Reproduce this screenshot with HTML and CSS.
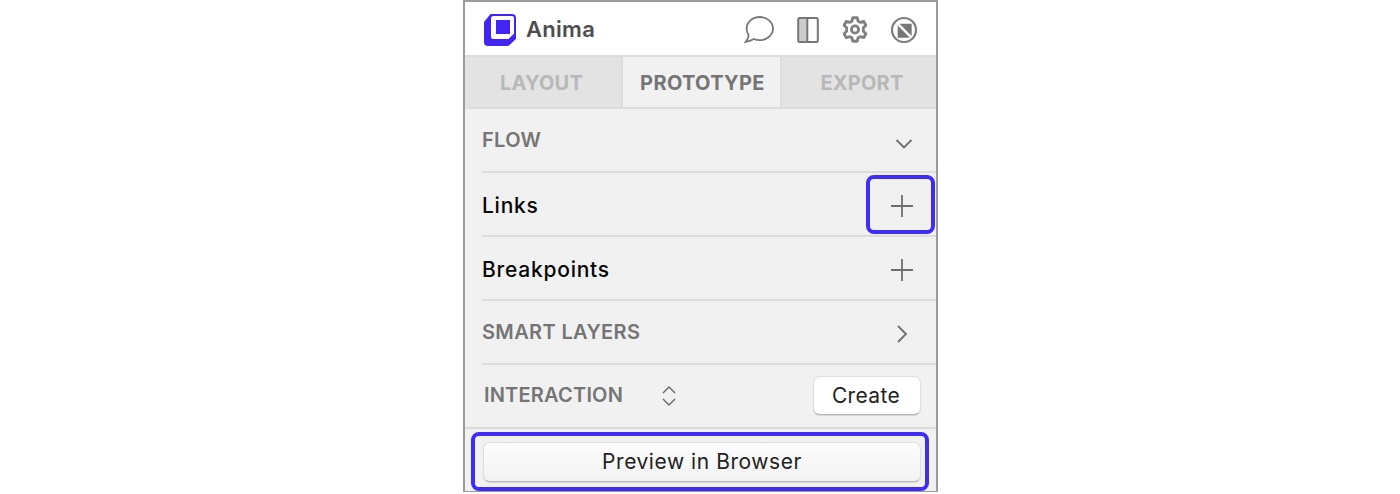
FILE: index.html
```html
<!DOCTYPE html>
<html lang="en">
<head>
    <meta charset="UTF-8">
    <meta name="viewport" content="width=device-width, initial-scale=1.0">
    <title>Anima</title>
    <link rel="stylesheet" href="styles.css">
</head>
<body>
    <div class="panel">
        <!-- Header -->
        <div class="header">
            <svg class="logo" width="32" height="32" viewBox="0 0 32 32">
                <path d="M6.500 0H28Q32 0 32 4V25L25.500 31Q24.500 32 23 32H4Q0 32 0 28V8Z" fill="#4225f4"/>
                <path d="M9.500 2H28Q30 2 30 4V19.500L24.500 25H9.500Q7 25 7 22.500V4.500Q7 2 9.500 2Z" fill="#fff"/>
                <rect x="12" y="6" width="14" height="14" fill="#4225f4"/>
            </svg>
            <span class="brand">Anima</span>
            <div class="header-icons">
                <svg class="icon-chat" width="31" height="28" viewBox="0 0 31 28" fill="none" stroke="#777" stroke-width="1.800">
                    <path d="M1.700 26.800Q4.500 24 4.600 20C3 18 2.600 16 2.600 13.600C2.600 7 8.500 2 15.700 2C23 2 29 7 29 13.600C29 20 23 25.200 15.700 25.200C13.500 25.200 11.500 24.800 9.800 24Q6 26.300 1.700 26.800Z"/>
                </svg>
                <svg width="24" height="28" viewBox="0 0 24 28">
                    <rect x="3" y="3" width="8" height="24" fill="#ccc"/>
                    <rect x="2.200" y="3" width="19.600" height="24" rx="1.500" fill="none" stroke="#777" stroke-width="2"/>
                    <path d="M11.300 3V27" stroke="#777" stroke-width="2"/>
                </svg>
                <svg width="26" height="28" viewBox="0 0 26 28" fill="none" stroke="#808080" stroke-width="2.800" stroke-linejoin="round">
                    <path transform="translate(13 14.500) scale(1.020) translate(-13 -14)" d="M10.800 2.500H15.200L16 5.800L18.200 7L21.500 6L23.700 9.800L21.200 12.200V15.800L23.700 18.200L21.500 22L18.200 21L16 22.200L15.200 25.500H10.800L10 22.200L7.800 21L4.500 22L2.300 18.200L4.800 15.800V12.200L2.300 9.800L4.500 6L7.800 7L10 5.800Z"/>
                    <circle cx="13" cy="14.500" r="3.600" stroke-width="2.800"/>
                </svg>
                <svg width="28" height="28" viewBox="0 0 28 28">
                    <circle cx="14" cy="15" r="12" fill="none" stroke="#7d7d7d" stroke-width="2.200"/>
                    <path d="M9.500 8.700H21.700V20.900Z" fill="#777"/>
                    <path d="M7.700 10.500L19.900 22.700H7.700Z" fill="#777"/>
                </svg>
            </div>
        </div>

        <!-- Tabs -->
        <div class="tabs">
            <div class="tab tab-layout">LAYOUT</div>
            <div class="tab tab-prototype active">PROTOTYPE</div>
            <div class="tab tab-export">EXPORT</div>
        </div>

        <!-- Rows -->
        <div class="row">
            <span class="section">FLOW</span>
            <svg class="row-icon" width="40" height="20" viewBox="0 0 40 20" fill="none" stroke="#6e6e6e" stroke-width="1.800">
                <path d="M14.500 8L22 15.500L29.500 8"/>
            </svg>
        </div>
        <div class="row">
            <span class="item">Links</span>
            <svg class="row-icon" width="40" height="24" viewBox="0 0 40 24" fill="none" stroke="#6e6e6e" stroke-width="1.800">
                <path d="M9 12H31M20 1V23"/>
            </svg>
        </div>
        <div class="row">
            <span class="item">Breakpoints</span>
            <svg class="row-icon" width="40" height="24" viewBox="0 0 40 24" fill="none" stroke="#6e6e6e" stroke-width="1.800">
                <path d="M9 12H31M20 1V23"/>
            </svg>
        </div>
        <div class="row">
            <span class="section">SMART LAYERS</span>
            <svg class="row-icon" width="40" height="20" viewBox="0 0 40 20" fill="none" stroke="#6e6e6e" stroke-width="1.800">
                <path d="M16 2L24 10L16 18"/>
            </svg>
        </div>
        <div class="row interaction">
            <span class="section">INTERACTION</span>
            <svg class="updown" width="16" height="22" viewBox="0 0 16 22" fill="none" stroke="#6e6e6e" stroke-width="1.500">
                <path d="M2 8L8 2L14 8M2 14L8 20L14 14"/>
            </svg>
            <button class="btn create">Create</button>
        </div>
        <div class="preview">
            <button class="btn preview-btn">Preview in Browser</button>
        </div>

        <!-- Highlights -->
        <div class="mark mark-links"></div>
        <div class="mark mark-preview"></div>
    </div>
</body>
</html>
```

FILE: styles.css
```css
/* General Reset */
* {
    margin: 0;
    padding: 0;
    box-sizing: border-box;
}

body {
    height: 494px;
    overflow: hidden;
    background: #fff;
    font-family: 'Inter', 'Liberation Sans', sans-serif;
}

.panel {
    position: relative;
    width: 475px;
    height: 492px;
    margin-left: 463px;
    background: #f1f1f1;
    border: 2px solid #9b9b9b;
    border-bottom-width: 1px;
}

/* Header */
.header {
    display: flex;
    align-items: center;
    height: 55px;
    padding: 0 18px 0 19px;
    background: #fff;
    border-bottom: 2px solid #dcdcdc;
}

.logo {
    margin-top: 2px;
    margin-right: 11px;
}

.brand {
    margin-left: -1px;
    font-size: 22px;
    font-weight: 600;
    letter-spacing: 0.3px;
    color: #4d4d4d;
}

.header-icons {
    display: flex;
    align-items: center;
    gap: 22px;
    margin-left: auto;
}

.icon-chat {
    margin-right: -1px;
}

/* Tabs */
.tabs {
    display: flex;
    height: 52px;
    border-bottom: 2px solid #dcdcdc;
}

.tab {
    display: flex;
    align-items: center;
    justify-content: center;
    padding-top: 2px;
    background: #e3e3e3;
    font-size: 20px;
    font-weight: 700;
    letter-spacing: 0.2px;
    color: #b8b8b8;
}

.tab-layout {
    width: 156px;
    padding-right: 3px;
}

.tab-prototype {
    width: 161px;
    padding-left: 2px;
    letter-spacing: 0.35px;
}

.tab-export {
    width: 154px;
    padding-left: 6px;
}

.tab.active {
    background: #f1f1f1;
    color: #757575;
    border-left: 2px solid #dcdcdc;
    border-right: 2px solid #dcdcdc;
}

/* Rows */
.row {
    display: flex;
    align-items: center;
    justify-content: space-between;
    height: 64px;
    margin-left: 17px;
    padding-right: 14px;
    border-bottom: 2px solid #dcdcdc;
}

.row-icon {
    margin-top: 4px;
}

.section {
    font-size: 20px;
    font-weight: 600;
    letter-spacing: 0.35px;
    color: #757575;
}

.item {
    padding-top: 2px;
    font-size: 21px;
    font-weight: 500;
    letter-spacing: 0.75px;
    color: #050505;
}

.interaction {
    margin-left: 0;
    padding: 0 15px 0 19px;
    justify-content: flex-start;
}

.interaction .section {
    margin-bottom: 3px;
    letter-spacing: 0.2px;
}

.updown {
    margin-left: 38px;
}

/* Buttons */
.btn {
    font-family: inherit;
    font-size: 21px;
    letter-spacing: 0.35px;
    color: #222;
    background: #fff;
    border: 1px solid #dedede;
    border-bottom-color: #b5b5b5;
    border-radius: 7px;
    box-shadow: 0 1px 1px rgba(0, 0, 0, 0.12);
}

.create {
    width: 108px;
    height: 39px;
    margin-left: auto;
    margin-bottom: 2px;
    padding-right: 2px;
}

.preview {
    padding: 13px 15px 0 18px;
}

.preview-btn {
    width: 100%;
    height: 40px;
    padding-bottom: 2px;
    letter-spacing: 0.55px;
    background: linear-gradient(#fdfdfd, #f2f2f2);
}

/* Highlights */
.mark {
    position: absolute;
    border: 4px solid #3f2df5;
    border-radius: 8px;
}

.mark-links {
    left: 401px;
    top: 173px;
    width: 69px;
    height: 59px;
}

.mark-preview {
    left: 6px;
    top: 430px;
    width: 458px;
    height: 59px;
}
```
